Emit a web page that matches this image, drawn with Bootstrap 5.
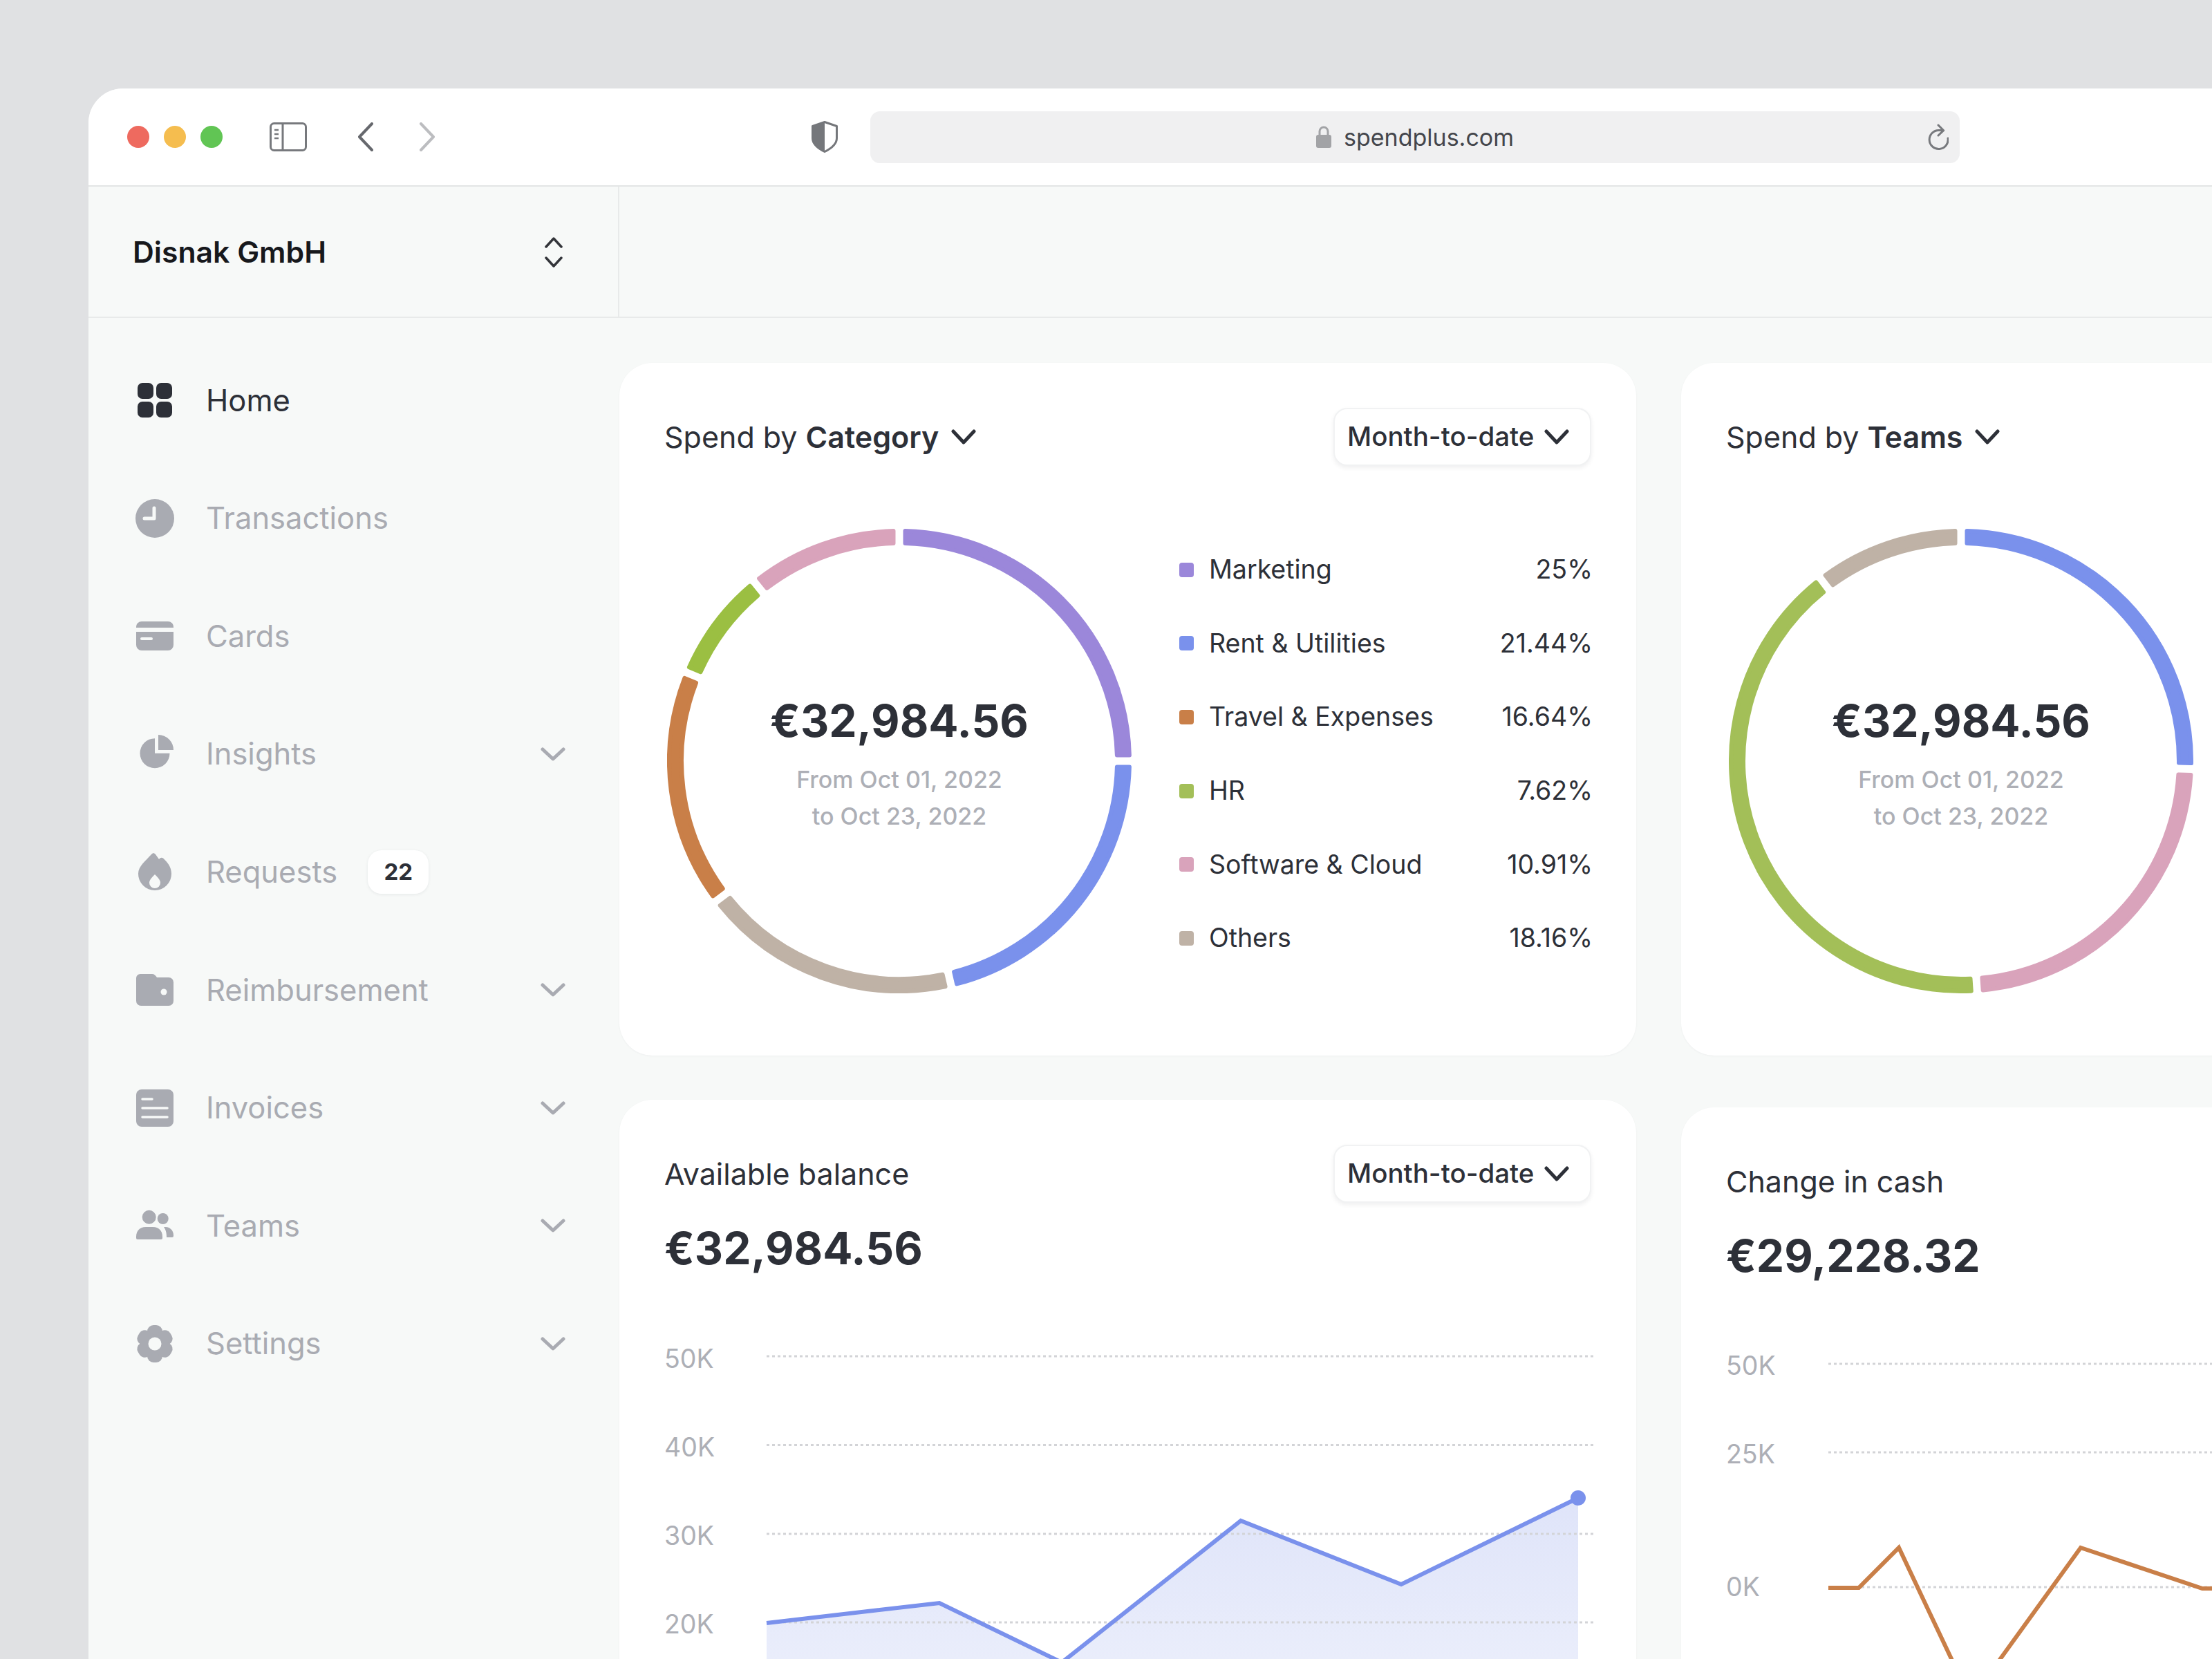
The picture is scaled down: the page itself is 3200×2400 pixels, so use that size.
<!DOCTYPE html>
<html lang="en">
<head>
  <meta charset="UTF-8" />
  <title>Spendplus</title>
  <link href="https://cdn.jsdelivr.net/npm/bootstrap@5.3.3/dist/css/bootstrap.min.css" rel="stylesheet" />
  <style>
    html, body { width: 3200px; height: 2400px; overflow: hidden; }
    body { background: #e0e1e3; padding: 128px 0 0 128px; font-family: Inter, "Liberation Sans", sans-serif; color: #2d3038; }
    .app-window { width: 3072px; height: 2272px; background: #f7f9f8; border-top-left-radius: 50px; overflow: hidden; }
    .chrome-bar { height: 142px; flex: none; background: #fff; border-bottom: 2px solid #e3e5e5; padding-left: 56px; }
    .light { width: 32px; height: 32px; border-radius: 50%; margin-right: 21px; }
    .light-red { background: #ee6a5f; }
    .light-amber { background: #f5bd4f; }
    .light-green { background: #61c554; }
    .tool-pane { margin-left: 47px; }
    .tool-back { margin-left: 73px; }
    .tool-forward { margin-left: 65px; }
    .tool-shield { margin-left: 544px; }
    .url-box { width: 1576px; height: 75px; margin-left: 47px; background: #f0f0f1; border-radius: 14px; font-size: 34px; color: #44464c; }
    .url-lock { margin-right: 18px; }
    .url-reload { right: 16px; top: 15px; }
    .side-col { width: 768px; flex: none; }
    .org-row { height: 190px; border-right: 2px solid #e8eaea; border-bottom: 2px solid #e8eaea; padding: 2px 80px 0 64px; font-size: 42.7px; font-weight: 600; color: #17181c; }
    .side-list { padding-top: 34px; }
    .side-item { height: 170.6px; padding: 0 78px 0 64px; font-size: 43.5px; color: #a9abb2; }
    .side-item.is-active { color: #2d3038; }
    .side-icon { width: 64px; height: 64px; margin-right: 42px; flex: none; }
    .count-pill { width: 88px; height: 63px; margin-left: 44px; background: #fff; border-radius: 20px; box-shadow: 0 1px 4px rgba(30, 35, 45, .08); color: #2d3038; font-size: 33px; font-weight: 700; }
    .top-strip { height: 190px; border-bottom: 2px solid #e8eaea; }
    .board { gap: 65px; padding-top: 65px; }
    .board-col { width: 1471px; flex: none; }
    .col-left { gap: 64px; }
    .col-right { gap: 75px; }
    .panel { background: #fff; border-radius: 48px; padding: 65px 65px 0; box-shadow: 0 1px 3px rgba(30, 35, 45, .04); }
    .panel-donut { height: 1002px; }
    .panel-chart { height: 860px; overflow: hidden; }
    .panel-head { height: 84px; font-size: 43px; }
    .head-caret { margin-left: 18px; }
    .range-btn { width: 373px; height: 84px; padding: 0 30px 0 18px; background: #fff; border: 2px solid #f1f2f3; border-radius: 20px; box-shadow: 0 3px 6px rgba(30, 35, 45, .07); font-size: 38.5px; font-weight: 500; color: #2d3038; }
    .donut-row { margin-top: 91px; }
    .donut-box { width: 672px; height: 672px; margin-left: 4px; flex: none; }
    .donut-mid { padding-top: 8px; }
    .amount { font-size: 64px; font-weight: 700; line-height: 80px; color: #2d3038; }
    .date-line { font-size: 34px; line-height: 53px; font-weight: 500; color: #adafb6; margin-top: 18px; }
    .legend-box { width: 598px; margin: 6px -2px 0 0; font-size: 37.5px; }
    .legend-row { height: 106.6px; }
    .swatch { width: 21px; height: 21px; border-radius: 4px; margin-right: 22px; }
    .tone-purple { background: #9b87da; }
    .tone-blue { background: #7a91ec; }
    .tone-orange { background: #c97f48; }
    .tone-green { background: #a3bf58; }
    .tone-pink { background: #d9a3bb; }
    .tone-beige { background: #bfb2a6; }
    .amount-line { margin-top: 26px; }
    .chart-svg { margin-top: 53px; display: block; overflow: visible; }
    .axis-text { font-family: Inter, "Liberation Sans", sans-serif; font-size: 37.5px; fill: #adafb6; }
    .grid-line { stroke: #d3d4d7; stroke-width: 3; stroke-dasharray: 4 4; }
  </style>
</head>
<body>

<div class="app-window d-flex flex-column">
  <div class="chrome-bar d-flex align-items-center">
    <span class="light light-red"></span>
    <span class="light light-amber"></span>
    <span class="light light-green"></span>
    <svg class="tool-pane" width="54" height="42" viewBox="0 0 54 42" fill="none" stroke="#77797d" stroke-width="3">
      <rect x="1.5" y="1.5" width="51" height="39" rx="5"/><path d="M19 2v38"/>
      <path d="M7 11h6M7 17h6M7 23h6" stroke-width="2.5"/>
    </svg>
    <svg class="tool-back" width="24" height="42" viewBox="0 0 24 42" fill="none" stroke="#66686d" stroke-width="4" stroke-linecap="round" stroke-linejoin="round">
      <path d="M21 2 3 21l18 19"/>
    </svg>
    <svg class="tool-forward" width="24" height="42" viewBox="0 0 24 42" fill="none" stroke="#bcbdc0" stroke-width="4" stroke-linecap="round" stroke-linejoin="round">
      <path d="M3 2l18 19L3 40"/>
    </svg>
    <svg class="tool-shield" width="38" height="46" viewBox="0 0 38 46">
      <path d="M19 1.5 36.500 7.500V25C36.500 33 28 40 19 44.500 10 40 1.500 33 1.500 25V7.500z" fill="#fff" stroke="#75777b" stroke-width="3" stroke-linejoin="round"/>
      <path d="M19 1.500 1.500 7.500V25C1.500 33 10 40 19 44.500z" fill="#75777b"/>
    </svg>
    <div class="url-box position-relative d-flex align-items-center justify-content-center">
      <svg class="url-lock" width="22" height="32" viewBox="0 0 22 32">
        <path d="M5 14V8a6 6 0 0 1 12 0v6" fill="none" stroke="#a2a3a6" stroke-width="3"/>
        <rect x="0" y="13" width="22" height="19" rx="3" fill="#a2a3a6"/>
      </svg>
      <span>spendplus.com</span>
      <svg class="url-reload position-absolute" width="34" height="44" viewBox="0 0 34 44" fill="none" stroke="#77797d" stroke-width="3" stroke-linecap="round" stroke-linejoin="round">
        <path d="M26 12.500H20A13.500 13.500 0 1 0 33 24M19 5l7.700 7.700L19 20"/>
      </svg>
    </div>
  </div>

  <div class="d-flex flex-grow-1">
    <div class="side-col">
      <div class="org-row d-flex align-items-center justify-content-between">
        <span>Disnak GmbH</span>
        <svg width="26" height="44" viewBox="0 0 26 44" fill="none" stroke="#33353a" stroke-width="3.5" stroke-linecap="round" stroke-linejoin="round">
          <path d="M2 14 13 2l11 12M2 30l11 12 11-12"/>
        </svg>
      </div>
      <div class="side-list">
        <div class="side-item is-active d-flex align-items-center">
          <svg class="side-icon" viewBox="0 0 64 64" fill="#2d3038">
            <rect x="7" y="7" width="23" height="23" rx="7"/><rect x="34" y="7" width="23" height="23" rx="7"/>
            <rect x="7" y="34" width="23" height="23" rx="7"/><rect x="34" y="34" width="23" height="23" rx="7"/>
          </svg>
          <span>Home</span>
        </div>
        <div class="side-item d-flex align-items-center">
          <svg class="side-icon" viewBox="0 0 64 64">
            <circle cx="32" cy="32" r="28" fill="#a9abb2"/>
            <path d="M31 17v15H17" fill="none" stroke="#f7f9f8" stroke-width="5" stroke-linecap="round" stroke-linejoin="round"/>
          </svg>
          <span>Transactions</span>
        </div>
        <div class="side-item d-flex align-items-center">
          <svg class="side-icon" viewBox="0 0 64 64">
            <path d="M13 11h38a8 8 0 0 1 8 8v1H5v-1a8 8 0 0 1 8-8z" fill="#a9abb2"/>
            <path d="M5 26h54v19a8 8 0 0 1-8 8H13a8 8 0 0 1-8-8z" fill="#a9abb2"/>
            <path d="M13 36h14" stroke="#f7f9f8" stroke-width="4" stroke-linecap="round"/>
          </svg>
          <span>Cards</span>
        </div>
        <div class="side-item d-flex align-items-center">
          <svg class="side-icon" viewBox="0 0 64 64" fill="#a9abb2">
            <path d="M32 9.200v21.500h21.500A21.500 21.500 0 1 1 32 9.200z"/>
            <path d="M37 4a22 22 0 0 1 22 22H37z"/>
          </svg>
          <span>Insights</span>
          <svg class="ms-auto" width="36" height="20" viewBox="0 0 36 20" fill="none" stroke="#a9abb2" stroke-width="5" stroke-linecap="round" stroke-linejoin="round"><path d="M3 3l15 14L33 3"/></svg>
        </div>
        <div class="side-item d-flex align-items-center">
          <svg class="side-icon" viewBox="0 0 64 64">
            <path d="M27 6c2-2.500 4-2.500 6 0l5 7 1.500-1.500c1.500-1 3-1 4.500 0C50 17 56 24 56 34a24 24 0 0 1-48 0C8 23 19 15 27 6z" fill="#a9abb2"/>
            <path d="M32 35c4 4 8 8 8 12a8 8 0 0 1-16 0c0-4 4-8 8-12z" fill="#f7f9f8"/>
          </svg>
          <span>Requests</span>
          <span class="count-pill d-flex align-items-center justify-content-center">22</span>
        </div>
        <div class="side-item d-flex align-items-center">
          <svg class="side-icon" viewBox="0 0 64 64">
            <path d="M11 9h17c3 0 5 2 7 5h17a7 7 0 0 1 7 7v27a7 7 0 0 1-7 7H12a7 7 0 0 1-7-7V15a6 6 0 0 1 6-6z" fill="#a9abb2"/>
            <circle cx="45" cy="35" r="4.500" fill="#f7f9f8"/>
          </svg>
          <span>Reimbursement</span>
          <svg class="ms-auto" width="36" height="20" viewBox="0 0 36 20" fill="none" stroke="#a9abb2" stroke-width="5" stroke-linecap="round" stroke-linejoin="round"><path d="M3 3l15 14L33 3"/></svg>
        </div>
        <div class="side-item d-flex align-items-center">
          <svg class="side-icon" viewBox="0 0 64 64">
            <rect x="5" y="5" width="54" height="54" rx="8" fill="#a9abb2"/>
            <path d="M14 19h14M14 32h36M14 45h36" stroke="#f7f9f8" stroke-width="3.500" stroke-linecap="round"/>
          </svg>
          <span>Invoices</span>
          <svg class="ms-auto" width="36" height="20" viewBox="0 0 36 20" fill="none" stroke="#a9abb2" stroke-width="5" stroke-linecap="round" stroke-linejoin="round"><path d="M3 3l15 14L33 3"/></svg>
        </div>
        <div class="side-item d-flex align-items-center">
          <svg class="side-icon" viewBox="0 0 64 64" fill="#a9abb2">
            <circle cx="23.700" cy="19.700" r="10"/><circle cx="43.700" cy="22" r="8"/>
            <path d="M5 48c0-9 6-14 14-14h10c8 0 14 5 14 14v2a2 2 0 0 1-2 2H7a2 2 0 0 1-2-2z"/>
            <path d="M45 34h2c7 0 12 5 12 12v1a2 2 0 0 1-2 2H49c0-6-1-11-4-15z"/>
          </svg>
          <span>Teams</span>
          <svg class="ms-auto" width="36" height="20" viewBox="0 0 36 20" fill="none" stroke="#a9abb2" stroke-width="5" stroke-linecap="round" stroke-linejoin="round"><path d="M3 3l15 14L33 3"/></svg>
        </div>
        <div class="side-item d-flex align-items-center">
          <svg class="side-icon" viewBox="0 0 64 64">
            <g fill="#a9abb2">
              <rect x="21" y="5" width="22" height="54" rx="9"/>
              <rect x="21" y="5" width="22" height="54" rx="9" transform="rotate(60 32 32)"/>
              <rect x="21" y="5" width="22" height="54" rx="9" transform="rotate(120 32 32)"/>
            </g>
            <circle cx="32" cy="32" r="9.500" fill="#f7f9f8"/>
          </svg>
          <span>Settings</span>
          <svg class="ms-auto" width="36" height="20" viewBox="0 0 36 20" fill="none" stroke="#a9abb2" stroke-width="5" stroke-linecap="round" stroke-linejoin="round"><path d="M3 3l15 14L33 3"/></svg>
        </div>
      </div>
    </div>

    <div class="flex-grow-1">
      <div class="top-strip"></div>
      <div class="board d-flex">
        <div class="board-col col-left d-flex flex-column">
          <div class="panel panel-donut">
            <div class="panel-head d-flex align-items-center justify-content-between">
              <div class="d-flex align-items-center">
                <span>Spend by <b class="fw-semibold">Category</b></span>
                <svg class="head-caret" width="36" height="22" viewBox="0 0 36 22" fill="none" stroke="#2d3038" stroke-width="5" stroke-linecap="round" stroke-linejoin="round"><path d="M3 3l15 16L33 3"/></svg>
              </div>
              <button class="btn range-btn d-flex align-items-center justify-content-between" type="button">
                <span>Month-to-date</span>
                <svg width="36" height="22" viewBox="0 0 36 22" fill="none" stroke="#2d3038" stroke-width="5" stroke-linecap="round" stroke-linejoin="round"><path d="M3 3l15 16L33 3"/></svg>
              </button>
            </div>
            <div class="donut-row d-flex justify-content-between">
              <div class="donut-box position-relative">
                <svg class="js-donut" width="672" height="672" viewBox="0 0 672 672"
                  data-segs="0:90:#9b87da,90:167:#7a91ec,167:232.6:#bfb2a6,232.6:292.6:#c97f48,292.6:321:#9bbf42,321:360:#d9a3bb"></svg>
                <div class="donut-mid position-absolute top-0 start-0 w-100 h-100 d-flex flex-column align-items-center justify-content-center text-center">
                  <div class="amount">€32,984.56</div>
                  <div class="date-line">From Oct 01, 2022<br>to Oct 23, 2022</div>
                </div>
              </div>
              <div class="legend-box">
                <div class="legend-row d-flex align-items-center"><span class="swatch tone-purple"></span><span>Marketing</span><span class="ms-auto">25%</span></div>
                <div class="legend-row d-flex align-items-center"><span class="swatch tone-blue"></span><span>Rent &amp; Utilities</span><span class="ms-auto">21.44%</span></div>
                <div class="legend-row d-flex align-items-center"><span class="swatch tone-orange"></span><span>Travel &amp; Expenses</span><span class="ms-auto">16.64%</span></div>
                <div class="legend-row d-flex align-items-center"><span class="swatch tone-green"></span><span>HR</span><span class="ms-auto">7.62%</span></div>
                <div class="legend-row d-flex align-items-center"><span class="swatch tone-pink"></span><span>Software &amp; Cloud</span><span class="ms-auto">10.91%</span></div>
                <div class="legend-row d-flex align-items-center"><span class="swatch tone-beige"></span><span>Others</span><span class="ms-auto">18.16%</span></div>
              </div>
            </div>
          </div>

          <div class="panel panel-chart">
            <div class="panel-head d-flex align-items-center justify-content-between">
              <span>Available balance</span>
              <button class="btn range-btn d-flex align-items-center justify-content-between" type="button">
                <span>Month-to-date</span>
                <svg width="36" height="22" viewBox="0 0 36 22" fill="none" stroke="#2d3038" stroke-width="5" stroke-linecap="round" stroke-linejoin="round"><path d="M3 3l15 16L33 3"/></svg>
              </button>
            </div>
            <div class="amount amount-line">€32,984.56</div>
            <svg class="chart-svg" width="1344" height="600" viewBox="0 0 1344 600">
              <defs>
                <linearGradient id="balanceFill" x1="0" y1="0" x2="0" y2="1">
                  <stop offset="0" stop-color="#dfe4f9"/><stop offset="1" stop-color="#eef1fc"/>
                </linearGradient>
              </defs>
              <text class="axis-text" x="0" y="80">50K</text>
              <text class="axis-text" x="0" y="208">40K</text>
              <text class="axis-text" x="0" y="336">30K</text>
              <text class="axis-text" x="0" y="464">20K</text>
              <path d="M148 449 398 420 575 506 834 301 1066 393 1322 268V600H148z" fill="url(#balanceFill)"/>
              <path class="grid-line" d="M148 63H1344M148 191.5H1344M148 320H1344M148 448H1344" fill="none"/>
              <path d="M148 449 398 420 575 506 834 301 1066 393 1322 268" fill="none" stroke="#7a91ec" stroke-width="6"/>
              <circle cx="1322" cy="268" r="11" fill="#7a91ec"/>
            </svg>
          </div>
        </div>

        <div class="board-col col-right d-flex flex-column">
          <div class="panel panel-donut">
            <div class="panel-head d-flex align-items-center">
              <span>Spend by <b class="fw-semibold">Teams</b></span>
              <svg class="head-caret" width="36" height="22" viewBox="0 0 36 22" fill="none" stroke="#2d3038" stroke-width="5" stroke-linecap="round" stroke-linejoin="round"><path d="M3 3l15 16L33 3"/></svg>
            </div>
            <div class="donut-row d-flex">
              <div class="donut-box position-relative">
                <svg class="js-donut" width="672" height="672" viewBox="0 0 672 672"
                  data-segs="0:92:#7a91ec,92:176:#d9a3bb,176:322.4:#a3bf58,322.4:360:#bfb2a6"></svg>
                <div class="donut-mid position-absolute top-0 start-0 w-100 h-100 d-flex flex-column align-items-center justify-content-center text-center">
                  <div class="amount">€32,984.56</div>
                  <div class="date-line">From Oct 01, 2022<br>to Oct 23, 2022</div>
                </div>
              </div>
            </div>
          </div>

          <div class="panel panel-chart">
            <div class="panel-head d-flex align-items-center">
              <span>Change in cash</span>
            </div>
            <div class="amount amount-line">€29,228.32</div>
            <svg class="chart-svg" width="1344" height="600" viewBox="0 0 1344 600">
              <text class="axis-text" x="0" y="79">50K</text>
              <text class="axis-text" x="0" y="207">25K</text>
              <text class="axis-text" x="0" y="399">0K</text>
              <path class="grid-line" d="M148 63H1344M148 191H1344M148 386H1344" fill="none"/>
              <path d="M148 387H192L250 329 354 549 513 329 689 388H803" fill="none" stroke="#c97f48" stroke-width="6"/>
            </svg>
          </div>
        </div>
      </div>
    </div>
  </div>
</div>

<script>
  // donut rings: filled arc sectors with a small round join for the soft corners
  const SVG_NS = "http://www.w3.org/2000/svg";

  function polar(r, deg) {
    const a = (deg - 90) * Math.PI / 180;
    return `${(336 + r * Math.cos(a)).toFixed(2)} ${(336 + r * Math.sin(a)).toFixed(2)}`;
  }

  document.querySelectorAll(".js-donut").forEach(svg => {
    svg.dataset.segs.split(",").forEach(seg => {
      const [from, to, color] = seg.split(":");
      const outer = 333, inner = 315;
      const padOuter = 8.5 / outer * 180 / Math.PI;
      const padInner = 8.5 / inner * 180 / Math.PI;
      const big = to - from > 180 ? 1 : 0;
      const path = document.createElementNS(SVG_NS, "path");
      path.setAttribute("d",
        `M${polar(outer, +from + padOuter)}A${outer} ${outer} 0 ${big} 1 ${polar(outer, +to - padOuter)}` +
        `L${polar(inner, +to - padInner)}A${inner} ${inner} 0 ${big} 0 ${polar(inner, +from + padInner)}Z`);
      path.setAttribute("fill", color);
      path.setAttribute("stroke", color);
      path.setAttribute("stroke-width", "6");
      path.setAttribute("stroke-linejoin", "round");
      svg.appendChild(path);
    });
  });
</script>

<script src="https://cdn.jsdelivr.net/npm/bootstrap@5.3.3/dist/js/bootstrap.bundle.min.js"></script>
</body>
</html>
